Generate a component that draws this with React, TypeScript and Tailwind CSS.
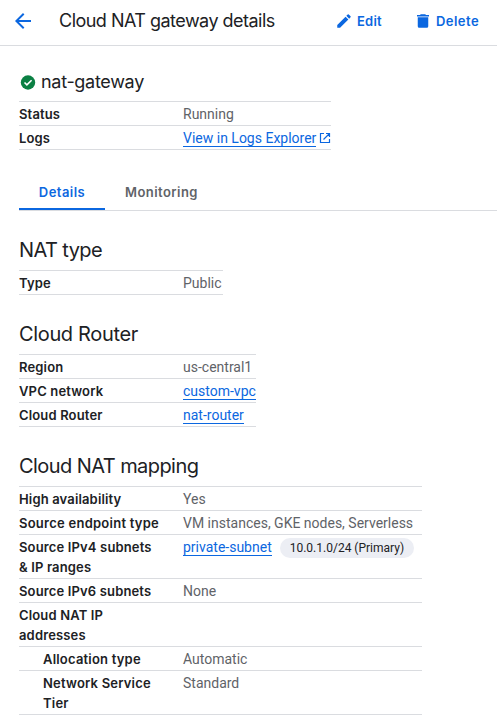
import type { ReactNode } from "react";

const label = "font-['Inter',sans-serif] font-semibold text-[13px] leading-5 text-[#202124]";
const heading = "font-['Inter',sans-serif] font-normal text-[#202124] whitespace-nowrap";

type RowProps = { name: ReactNode; children?: ReactNode; nested?: boolean; tracking?: string };

function Row({ name, children, nested, tracking = "tracking-[0.15px]" }: RowProps) {
  return (
    <div className="flex border-b border-[#dadce0] pt-[2px] pb-px">
      <div className={`${label} ${tracking} w-[164px] shrink-0 whitespace-nowrap ${nested ? "pl-6" : ""}`}>{name}</div>
      <div className="flex h-5 items-center whitespace-nowrap text-[14px] leading-5 text-[#5f6368]">{children}</div>
    </div>
  );
}

function Link({ children }: { children: ReactNode }) {
  return <a className="h-[18px] border-b border-[#0b67e0] leading-[19px] text-[#0b67e0]">{children}</a>;
}

export default function App() {
  return (
    <div className="h-[726px] w-[497px] overflow-hidden bg-white font-['Roboto',sans-serif]">
      <header className="flex h-[46px] items-center border-b border-[#dadce0] pb-[3px] text-[#0b67e0]">
        <svg className="ml-[11px] size-6 shrink-0" viewBox="0 0 24 24" fill="currentColor">
          <path d="M20 11H7.83l5.59-5.59L12 4l-8 8 8 8 1.41-1.41L7.83 13H20v-2z" />
        </svg>
        <h1 className={`${heading} ml-6 w-[270px] pb-px text-[18px] tracking-[-0.52px]`}><span>Cloud NAT gateway details</span></h1>
        <svg className="ml-[6px] size-[18px] shrink-0" viewBox="0 0 24 24" fill="currentColor">
          <path d="M3 17.25V21h3.75L17.81 9.94l-3.75-3.75L3 17.25zM20.71 7.04a1 1 0 0 0 0-1.41l-2.34-2.34a1 1 0 0 0-1.41 0l-1.83 1.83 3.75 3.75 1.83-1.83z" />
        </svg>
        <span className="ml-[4px] w-[57px] pt-px font-['Inter',sans-serif] text-[13px] font-semibold tracking-[0.2px]">Edit</span>
        <svg className="size-[18px] shrink-0" viewBox="0 0 24 24" fill="currentColor">
          <path d="M5 19a2 2 0 0 0 2 2h10a2 2 0 0 0 2-2V7H5v12zM20 4h-4l-1-1H9L8 4H4v2h16V4z" />
        </svg>
        <span className="ml-[4px] pt-px font-['Inter',sans-serif] text-[13px] font-semibold tracking-[0.45px]">Delete</span>
      </header>

      <main className="pl-[19px]">
        <div className="flex h-[55px] items-center pt-[17px]">
          <svg className="mr-[5px] ml-px size-4" viewBox="0 0 16 16">
            <circle cx="8" cy="8.5" r="7.2" fill="#0b8043" />
            <path d="M4.5 8.5l2.4 2.4 4.7-4.7" fill="none" stroke="white" strokeWidth="1.6" />
          </svg>
          <h2 className={`${heading} pb-[2px] text-[18px] tracking-[-0.3px]`}><span>nat-gateway</span></h2>
        </div>
        <section className="w-[312px] border-t border-[#dadce0]">
          <Row name="Status">Running</Row>
          <Row name="Logs">
            <Link>View in Logs Explorer</Link>
            <svg className="ml-[3px] size-3" viewBox="0 0 12 12" fill="none" stroke="#0b67e0" strokeWidth="1.2">
              <path d="M5 1.5H1.5v9h9V7M7 1.5h3.5V5M10.5 1.5L4.5 7.5" />
            </svg>
          </Row>
        </section>

        <nav className="mt-[24px] flex h-[37px] border-b border-[#dadce0] font-['Inter',sans-serif] text-[13px] font-semibold leading-5 tracking-[0.45px]">
          <div className="h-9 w-[86px] border-b-2 border-[#0b67e0] pt-[8px] text-center text-[#0b67e0]">Details</div>
          <div className="pt-[8px] pl-5 text-[#5f6368]"><span>Monitoring</span></div>
        </nav>

        <section className="mt-[19px]">
          <h2 className={`${heading} h-10 text-[20px] leading-10 tracking-[-0.6px]`}><span>NAT type</span></h2>
          <div className="w-[204px] border-t border-[#dadce0]">
            <Row name="Type">Public</Row>
          </div>
        </section>

        <section className="mt-[19px]">
          <h2 className={`${heading} h-10 text-[20px] leading-10 tracking-[-0.35px]`}><span>Cloud Router</span></h2>
          <div className="w-[237px] border-t border-[#dadce0]">
            <Row name="Region">us-central1</Row>
            <Row name="VPC network"><Link>custom-vpc</Link></Row>
            <Row name="Cloud Router"><Link>nat-router</Link></Row>
          </div>
        </section>

        <section className="mt-[19px]">
          <h2 className={`${heading} h-10 text-[20px] leading-10 tracking-[-0.57px]`}><span>Cloud NAT mapping</span></h2>
          <div className="w-[403px] border-t border-[#dadce0]">
            <Row name="High availability">Yes</Row>
            <Row name="Source endpoint type" tracking="tracking-[0.25px]">VM instances, GKE nodes, Serverless</Row>
            <Row name={<>Source IPv4 subnets<br />&amp; IP ranges</>}>
              <Link>private-subnet</Link>
              <span className="mt-[2px] ml-2 h-5 rounded-full bg-[#eceef4] px-[10px] text-[12px] leading-5 text-[#202124]">10.0.1.0/24 (Primary)</span>
            </Row>
            <Row name="Source IPv6 subnets">None</Row>
            <Row name={<>Cloud NAT IP<br />addresses</>} />
            <Row name="Allocation type" nested tracking="tracking-[0.2px]">Automatic</Row>
            <Row name={<>Network Service<br />Tier</>} nested tracking="tracking-[0.2px]">Standard</Row>
          </div>
        </section>
      </main>
    </div>
  );
}
